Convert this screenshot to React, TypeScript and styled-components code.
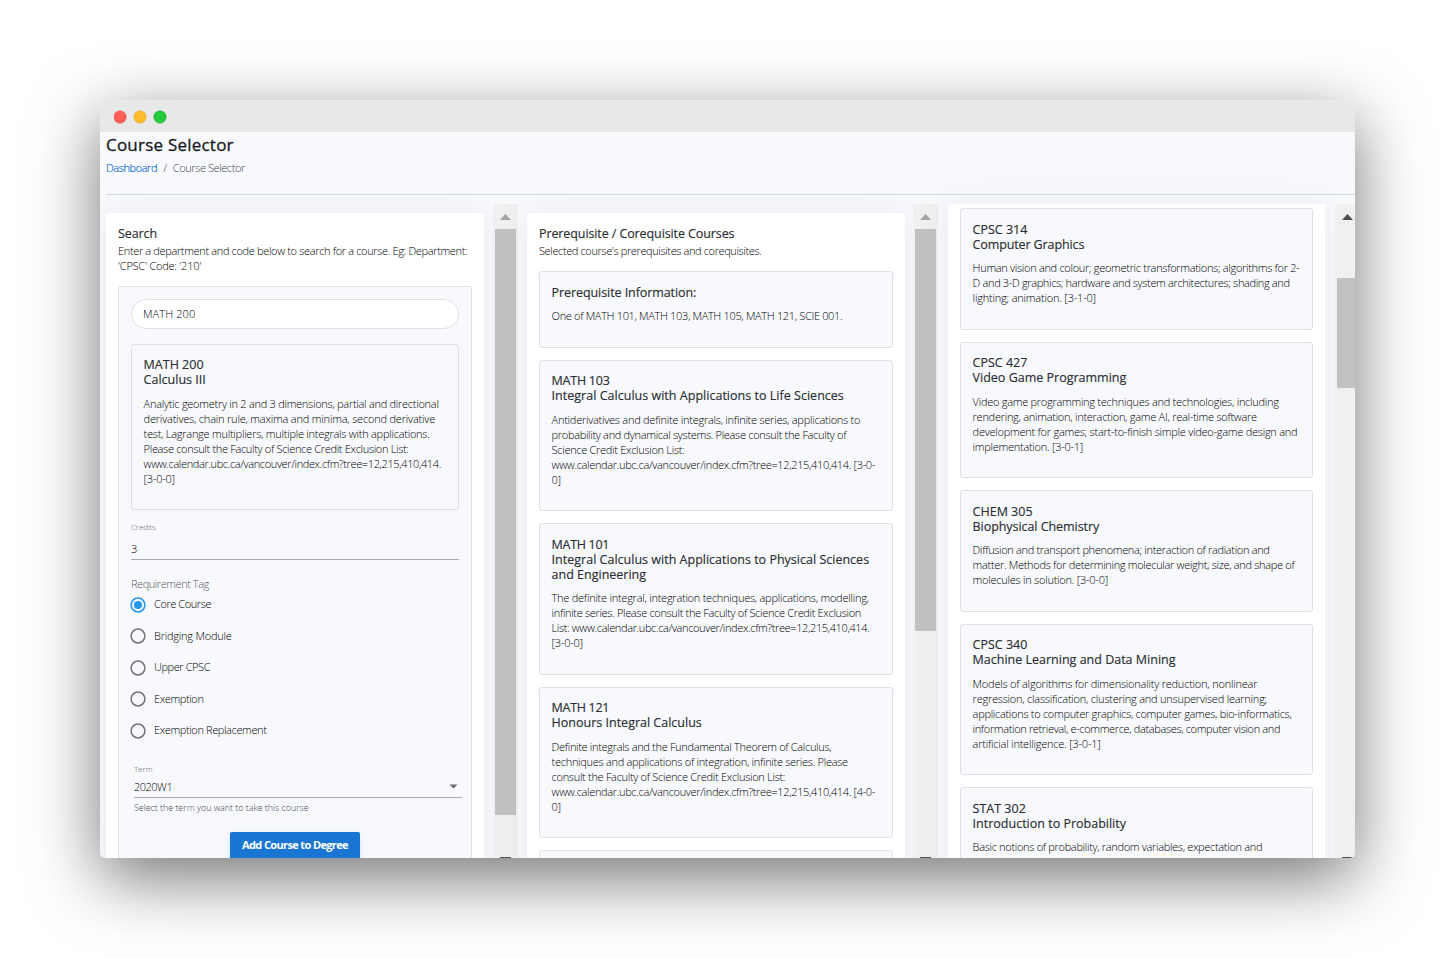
import React from "react";
import styled, { createGlobalStyle, css } from "styled-components";

const GlobalStyle = createGlobalStyle`
  * { box-sizing: border-box; }
  body {
    margin: 0;
    background: #fff;
    font-family: "Open Sans", "Noto Sans", sans-serif;
    font-weight: 300;
    color: #000;
    overflow: hidden;
  }
`;

const Stage = styled.div`
  height: 958px;
  padding: 100px;
  width: 1455px;
`;

const BrowserWindow = styled.main`
  width: 1255px;
  height: 758px;
  border-radius: 5px;
  overflow: hidden;
  background: #f8f9fd;
  box-shadow: 0 20px 68px rgba(0, 0, 0, 0.55);
  display: flex;
  flex-direction: column;
`;

const TitleBar = styled.div`
  flex: none;
  height: 32px;
  background: #e8e8e8;
  display: flex;
  align-items: center;
  gap: 8px;
  padding: 2px 0 0 14px;
`;

const Controls = styled.svg`
  display: block;
`;

const Header = styled.header`
  flex: none;
  height: 63px;
  margin-left: 6px;
  border-bottom: 1px solid #d8dbdf;
`;

const PageTitle = styled.h1`
  margin: 0;
  font-size: 17px;
  line-height: 26px;
  font-weight: 400;
  letter-spacing: 0.22px;
  color: #16181b;
  -webkit-text-stroke: 0.3px #16181b;
`;

const Crumbs = styled.nav`
  display: flex;
  gap: 6.2px;
  font-size: 11px;
  line-height: 15px;
  margin-top: 2px;
  letter-spacing: -0.42px;
  color: #43484d;
`;

const CrumbLink = styled.span`
  color: #005fd6;
  -webkit-text-stroke: 0.15px #005fd6;
`;

const Columns = styled.div`
  flex: 1;
  min-height: 0;
  margin-top: 9px;
  padding-left: 6px;
  display: flex;
`;

const Column = styled.section<{ $gap?: number }>`
  flex: none;
  margin-left: ${(p) => p.$gap ?? 0}px;
  height: 654px;
  display: flex;
`;

const Panel = styled.div<{ $scrolled?: boolean }>`
  width: 378px;
  height: 760px;
  margin-top: 9px;
  padding: 12px;
  background: #fff;
  border-radius: 3px;
  box-shadow: 0 0 31px rgba(154, 161, 171, 0.15);
  ${(p) =>
    p.$scrolled &&
    css`
      width: 377px;
      margin-top: 0;
      padding-top: 4px;
      border-radius: 0;
    `}
`;

const Track = styled.div<{ $gap: number }>`
  width: 25px;
  height: 670px;
  margin-left: ${(p) => p.$gap}px;
  background: #f0f0f0;
  display: flex;
  flex-direction: column;
  align-items: center;
`;

const ArrowSlot = styled.div`
  height: 25px;
  width: 25px;
  flex: none;
  display: flex;
  align-items: center;
  justify-content: center;
`;

const Thumb = styled.div<{ $offset: number; $length: number }>`
  flex: none;
  width: 21px;
  margin-top: ${(p) => p.$offset}px;
  height: ${(p) => p.$length}px;
  background: #c1c1c1;
`;

const DownSlot = styled.div<{ $gap: number }>`
  flex: none;
  margin-top: ${(p) => p.$gap}px;
  width: 11px;
  height: 6px;
  display: flex;
`;

const SectionTitle = styled.h2`
  margin: 0;
  font-size: 12.5px;
  line-height: 15px;
  font-weight: 400;
  letter-spacing: -0.1px;
  padding-top: 1px;
  color: #2a2e32;
  -webkit-text-stroke: 0.15px #2a2e32;
`;

const SectionText = styled.p`
  margin: 1.5px 0 13.5px;
  font-size: 11px;
  line-height: 15px;
  letter-spacing: -0.25px;
`;

const CardBox = styled.article`
  border: 1px solid #dee0e3;
  border-radius: 3px;
  background: #f8f9fd;
  padding: 12.6px 0 23.45px 11.6px;
  margin-bottom: 12px;
`;

const CardTitle = styled.h3`
  margin: 0 0 8.5px;
  font-size: 12.5px;
  line-height: 15px;
  font-weight: 400;
  color: #2a2e32;
  -webkit-text-stroke: 0.15px #2a2e32;
`;

const CardText = styled.p`
  margin: 0;
  font-size: 11px;
  line-height: 15px;
  letter-spacing: -0.25px;
`;

const TextLine = styled.span<{ $track?: number }>`
  display: block;
  white-space: pre;
  ${(p) => p.$track !== undefined && `letter-spacing: ${p.$track}px;`}
`;

const FormBox = styled.div`
  height: 620px;
  border: 1px solid #dee0e3;
  border-radius: 3px;
  background: #f8f9fd;
  padding: 12px 12px 0;
`;

const SearchField = styled.div`
  height: 30px;
  border: 1px solid #dee0e3;
  border-radius: 15px;
  background: #fff;
  padding-left: 11px;
  font-size: 11px;
  line-height: 28px;
  letter-spacing: 0.1px;
  margin-bottom: 14.7px;
`;

const FieldLabel = styled.div`
  font-size: 8px;
  line-height: 10px;
  letter-spacing: -0.1px;
  color: #66686b;
`;

const CreditsField = styled.div`
  margin-top: -0.1px;
`;

const FieldValue = styled.div<{ $pad: number }>`
  border-bottom: 1px solid #a9abae;
  font-size: 11px;
  line-height: 15px;
  letter-spacing: -0.5px;
  padding: ${(p) => p.$pad}px 0 3px;
  display: flex;
  align-items: center;
  justify-content: space-between;
`;

const GroupLabel = styled.div`
  margin-top: 16px;
  font-size: 11px;
  line-height: 15px;
  letter-spacing: -0.45px;
  color: #575c62;
`;

const RadioRow = styled.div`
  height: 31.5px;
  display: flex;
  align-items: center;
  gap: 8px;
  font-size: 11px;
  letter-spacing: -0.38px;
  margin-left: -1px;
`;

const Radios = styled.div`
  margin-top: -2.1px;
`;

const RadioLabel = styled.span<{ $track?: number }>`
  line-height: 15px;
  margin-top: -2.4px;
  ${(p) => p.$track !== undefined && `letter-spacing: ${p.$track}px;`}
`;

const TermField = styled.div`
  margin: 17.5px -3px 0 3px;
`;

const ArrowPad = styled.span`
  display: flex;
  padding-right: 4px;
`;

const Helper = styled.div`
  margin-top: 4px;
  font-size: 9px;
  line-height: 11px;
  letter-spacing: -0.06px;
  color: #43484d;
`;

const SubmitButton = styled.button`
  display: block;
  width: 130px;
  height: 29px;
  margin: 18.5px auto 0;
  padding: 0 0 2px;
  border: 0;
  border-radius: 2px;
  background: #1976d2;
  color: #fff;
  font: 700 11px/26px "Open Sans", sans-serif;
  letter-spacing: -0.63px;
  box-shadow: 0 2px 6px rgba(25, 118, 210, 0.15);
`;

type Line = string | [string, number];
type Course = { title: Line[]; text: Line[] };

const Lines = ({ of }: { of: Line[] }) => (
  <>
    {of.map((l, i) =>
      typeof l === "string" ? (
        <TextLine key={i}>{l}</TextLine>
      ) : (
        <TextLine key={i} $track={l[1]}>
          {l[0]}
        </TextLine>
      )
    )}
  </>
);

const CourseCard = ({ title, text }: Course) => (
  <CardBox>
    <CardTitle>
      <Lines of={title} />
    </CardTitle>
    <CardText>
      <Lines of={text} />
    </CardText>
  </CardBox>
);

const Radio = ({ on }: { on?: boolean }) => (
  <svg width="16" height="16" viewBox="0 0 16 16" fill="none">
    <circle cx="8" cy="8" r="6.9" stroke={on ? "#2196f3" : "#737477"} strokeWidth="1.5" />
    {on && <circle cx="8" cy="8" r="4" fill="#2196f3" />}
  </svg>
);

const Up = ({ fill }: { fill: string }) => (
  <svg width="11" height="6" viewBox="0 0 11 6">
    <path d="M5.5 0L11 6H0z" fill={fill} />
  </svg>
);

const Down = () => (
  <svg width="11" height="6" viewBox="0 0 11 6">
    <path d="M0 0H11V1H10L5.5 6L1 1H0z" fill="#505050" />
  </svg>
);

type ScrollbarProps = { gap: number; offset: number; length: number; active?: boolean };

const Scrollbar = ({ gap, offset, length, active }: ScrollbarProps) => (
  <Track $gap={gap}>
    <ArrowSlot>
      <Up fill={active ? "#505050" : "#a3a3a3"} />
    </ArrowSlot>
    <Thumb $offset={offset} $length={length} />
    <DownSlot $gap={653 - 25 - offset - length}>
      <Down />
    </DownSlot>
  </Track>
);

const tags: { label: string; track?: number }[] = [
  { label: "Core Course", track: -0.42 },
  { label: "Bridging Module", track: -0.22 },
  { label: "Upper CPSC", track: -0.42 },
  { label: "Exemption" },
  { label: "Exemption Replacement" },
];

const selected: Course = {
  title: ["MATH 200", "Calculus III"],
  text: [
    ["Analytic geometry in 2 and 3 dimensions, partial and directional", -0.27],
    ["derivatives, chain rule, maxima and minima, second derivative", -0.2],
    "test, Lagrange multipliers, multiple integrals with applications.",
    ["Please consult the Faculty of Science Credit Exclusion List:", -0.32],
    ["www.calendar.ubc.ca/vancouver/index.cfm?tree=12,215,410,414.", -0.375],
    "[3-0-0]",
  ],
};

const prerequisites: Course[] = [
  {
    title: [["Prerequisite Information:", -0.08]],
    text: [["One of MATH 101, MATH 103, MATH 105, MATH 121, SCIE 001.", -0.33]],
  },
  {
    title: [["MATH 103", -0.25], ["Integral Calculus with Applications to Life Sciences", 0.02]],
    text: [
      "Antiderivatives and definite integrals, infinite series, applications to",
      ["probability and dynamical systems. Please consult the Faculty of", -0.31],
      ["Science Credit Exclusion List:", -0.3],
      ["www.calendar.ubc.ca/vancouver/index.cfm?tree=12,215,410,414. [3-0-", -0.34],
      "0]",
    ],
  },
  {
    title: [
      ["MATH 101", -0.3],
      ["Integral Calculus with Applications to Physical Sciences", 0.01],
      "and Engineering",
    ],
    text: [
      "The definite integral, integration techniques, applications, modelling,",
      ["infinite series. Please consult the Faculty of Science Credit Exclusion", -0.33],
      ["List: www.calendar.ubc.ca/vancouver/index.cfm?tree=12,215,410,414.", -0.37],
      "[3-0-0]",
    ],
  },
  {
    title: [["MATH 121", -0.3], "Honours Integral Calculus"],
    text: [
      ["Definite integrals and the Fundamental Theorem of Calculus,", -0.32],
      ["techniques and applications of integration, infinite series. Please", -0.29],
      ["consult the Faculty of Science Credit Exclusion List:", -0.3],
      ["www.calendar.ubc.ca/vancouver/index.cfm?tree=12,215,410,414. [4-0-", -0.34],
      "0]",
    ],
  },
  { title: [], text: [] },
];

const dependents: Course[] = [
  {
    title: ["CPSC 314", ["Computer Graphics", -0.12]],
    text: [
      ["Human vision and colour; geometric transformations; algorithms for 2-", -0.305],
      ["D and 3-D graphics; hardware and system architectures; shading and", -0.35],
      ["lighting; animation. [3-1-0]", -0.2],
    ],
  },
  {
    title: ["CPSC 427", "Video Game Programming"],
    text: [
      ["Video game programming techniques and technologies, including", -0.27],
      ["rendering, animation, interaction, game AI, real-time software", -0.27],
      "development for games; start-to-finish simple video-game design and",
      ["implementation. [3-0-1]", -0.27],
    ],
  },
  {
    title: ["CHEM 305", ["Biophysical Chemistry", -0.06]],
    text: [
      ["Diffusion and transport phenomena; interaction of radiation and", -0.33],
      ["matter. Methods for determining molecular weight, size, and shape of", -0.31],
      "molecules in solution. [3-0-0]",
    ],
  },
  {
    title: ["CPSC 340", "Machine Learning and Data Mining"],
    text: [
      ["Models of algorithms for dimensionality reduction, nonlinear", -0.22],
      ["regression, classification, clustering and unsupervised learning;", -0.23],
      ["applications to computer graphics, computer games, bio-informatics,", -0.295],
      ["information retrieval, e-commerce, databases, computer vision and", -0.35],
      ["artificial intelligence. [3-0-1]", -0.22],
    ],
  },
  {
    title: ["STAT 302", "Introduction to Probability"],
    text: [["Basic notions of probability, random variables, expectation and", -0.315]],
  },
];

export default function App() {
  return (
    <Stage>
      <GlobalStyle />
      <BrowserWindow>
        <TitleBar>
          <Controls width="54" height="14" viewBox="0 0 54 14">
            <circle cx="6" cy="7" r="6.2" fill="#ff5f56" stroke="#e0443e" strokeWidth="0.5" />
            <circle cx="26" cy="7" r="6.2" fill="#ffbd2e" stroke="#dea123" strokeWidth="0.5" />
            <circle cx="46" cy="7" r="6.2" fill="#27c93f" stroke="#1aab29" strokeWidth="0.5" />
          </Controls>
        </TitleBar>
        <Header>
          <PageTitle>Course Selector</PageTitle>
          <Crumbs>
            <CrumbLink>Dashboard</CrumbLink>
            <span>/</span>
            <span>Course Selector</span>
          </Crumbs>
        </Header>
        <Columns>
          <Column>
            <Panel>
              <SectionTitle>Search</SectionTitle>
              <SectionText>
                <Lines
                  of={[
                    ["Enter a department and code below to search for a course. Eg: Department:", -0.345],
                    "'CPSC' Code: '210'",
                  ]}
                />
              </SectionText>
              <FormBox>
                <SearchField>MATH 200</SearchField>
                <CourseCard {...selected} />
                <CreditsField>
                  <FieldLabel>Credits</FieldLabel>
                  <FieldValue $pad={9}>3</FieldValue>
                </CreditsField>
                <GroupLabel>Requirement Tag</GroupLabel>
                <Radios>
                  {tags.map((t, i) => (
                    <RadioRow key={t.label}>
                      <Radio on={i === 0} />
                      <RadioLabel $track={t.track}>{t.label}</RadioLabel>
                    </RadioRow>
                  ))}
                </Radios>
                <TermField>
                  <FieldLabel>Term</FieldLabel>
                  <FieldValue $pad={5}>
                    2020W1
                    <ArrowPad>
                      <svg width="9" height="5" viewBox="0 0 9 5">
                        <path d="M0.5 0.5H8.5L4.5 4.5z" fill="#6b6c6f" />
                      </svg>
                    </ArrowPad>
                  </FieldValue>
                  <Helper>Select the term you want to take this course</Helper>
                </TermField>
                <SubmitButton>Add Course to Degree</SubmitButton>
              </FormBox>
            </Panel>
            <Scrollbar gap={9} offset={0} length={586} />
          </Column>
          <Column $gap={9}>
            <Panel>
              <SectionTitle>Prerequisite / Corequisite Courses</SectionTitle>
              <SectionText>
                <Lines of={[["Selected course's prerequisites and corequisites.", -0.38]]} />
              </SectionText>
              {prerequisites.map((c, i) => (
                <CourseCard key={i} {...c} />
              ))}
            </Panel>
            <Scrollbar gap={8} offset={0} length={402} />
          </Column>
          <Column $gap={10}>
            <Panel $scrolled>
              {dependents.map((c, i) => (
                <CourseCard key={i} {...c} />
              ))}
            </Panel>
            <Scrollbar gap={10} offset={49} length={110} active />
          </Column>
        </Columns>
      </BrowserWindow>
    </Stage>
  );
}
